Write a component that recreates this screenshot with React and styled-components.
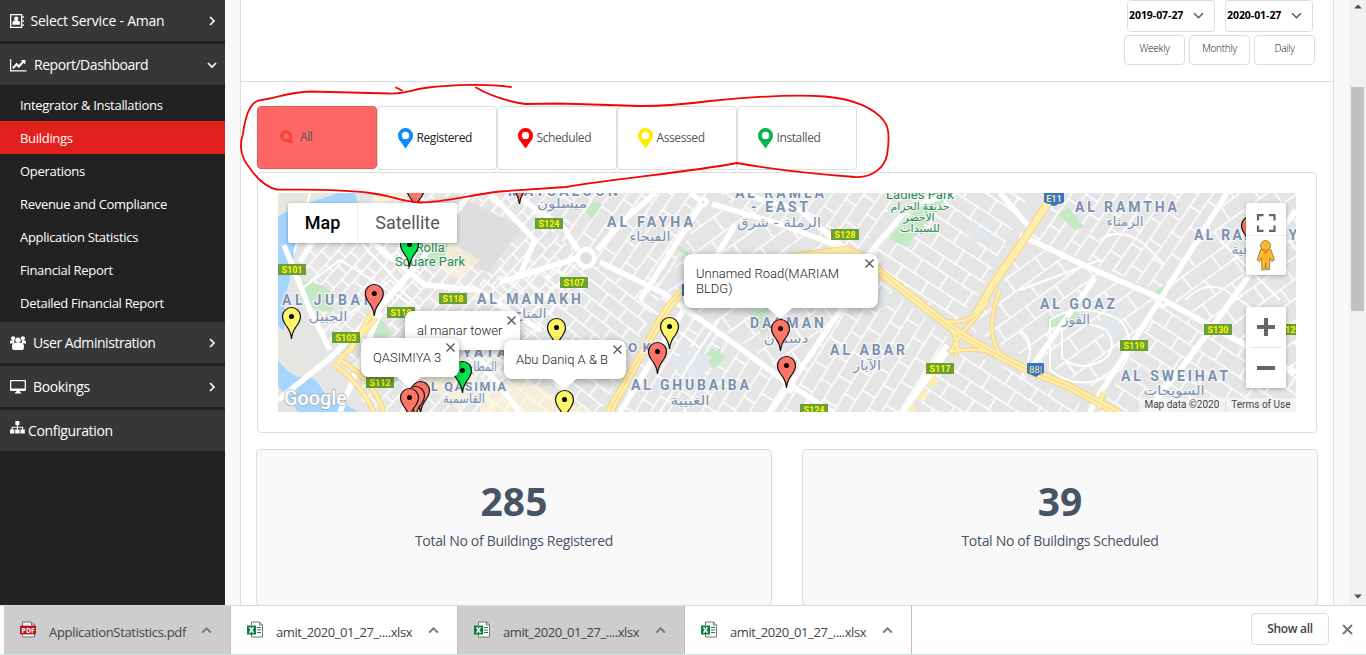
import React from "react";
import styled, { createGlobalStyle, css } from "styled-components";

const GlobalStyle = createGlobalStyle`
  * { box-sizing: border-box; }
  html, body { margin: 0; padding: 0; overflow: hidden; }
  body { font-family: "Open Sans", "Noto Sans", sans-serif; background: #fff; }
`;

/* ---------- frame ---------- */
const Screen = styled.div`
  position: relative;
  display: flex;
  flex-direction: column;
  width: 1366px;
  height: 655px;
  overflow: hidden;
`;
const Viewport = styled.div`
  display: flex;
  height: 605px;
  overflow: hidden;
`;
const Content = styled.main`
  flex: 1;
  min-width: 0;
  padding: 0 15px;
  background: #f9f9f9;
`;
const Panel = styled.section`
  height: 605px;
  overflow: hidden;
  background: #fff;
  border: solid #ddd;
  border-width: 0 1px;
`;

/* ---------- sidebar ---------- */
const Sidebar = styled.nav`
  display: flex;
  flex-direction: column;
  gap: 3px;
  width: 225px;
  background: #222;
`;
const MenuItem = styled.div`
  display: flex;
  align-items: center;
  gap: ${(p) => p.$gap}px;
  height: 41px;
  padding: 0 8px 0 10px;
  background: #373737;
  color: #fff;
  font-size: 14px;
  letter-spacing: ${(p) => p.$track || -0.35}px;
  white-space: nowrap;
`;
const MenuLabel = styled.span`
  flex: 1;
  padding-bottom: 1px;
`;
const SubMenu = styled.div`
  display: flex;
  flex-direction: column;
`;
const SubItem = styled.div`
  height: 33px;
  padding-left: 20px;
  line-height: 34px;
  font-size: 13px;
  letter-spacing: -0.3px;
  color: #fff;
  background: ${(p) => (p.$active ? "#e3211c" : "transparent")};
`;

/* ---------- filters ---------- */
const FilterBar = styled.header`
  display: flex;
  flex-direction: column;
  align-items: flex-end;
  gap: 3px;
  height: 82px;
  padding-right: 18px;
  border-bottom: 1px solid #ddd;
`;
const DateRow = styled.div`
  display: flex;
  gap: 10px;
  padding-right: 2px;
`;
const DateBox = styled.div`
  display: flex;
  align-items: center;
  justify-content: space-between;
  width: 88px;
  height: 32px;
  padding: 0 10px 2px 1px;
  border: 1px solid #ddd;
  border-radius: 4px;
  font-size: 10.5px;
  font-weight: 700;
  letter-spacing: -0.05px;
  color: #000;
`;
const PeriodRow = styled.div`
  display: flex;
  gap: 4px;
`;
const PeriodButton = styled.div`
  width: 61px;
  height: 30px;
  border: 1px solid #ddd;
  border-radius: 4px;
  text-align: center;
  font-size: 10px;
  font-weight: 300;
  letter-spacing: -0.25px;
  line-height: 24px;
  color: #111;
`;

/* ---------- status tabs ---------- */
const Body = styled.div`
  padding: 24px 15px 0;
`;
const Tabs = styled.div`
  display: flex;
  padding-left: 1px;
  height: 66px;
`;
const Tab = styled.div`
  display: flex;
  align-items: center;
  gap: ${(p) => (p.$active ? 7 : 3.5)}px;
  width: 120px;
  height: ${(p) => (p.$active ? 63 : 64)}px;
  padding: 0 0 ${(p) => (p.$active ? 1 : 0)}px ${(p) => (p.$active ? 22 : 20)}px;
  border: 1px solid ${(p) => (p.$active ? "#e25b5b" : "#ddd")};
  border-radius: 4px;
  background: ${(p) => (p.$active ? "#ff6666" : "#fff")};
  color: ${(p) => (p.$dark ? "#222" : "#555")};
  font-size: 12px;
  letter-spacing: -0.4px;
`;
const TabLabel = styled.span`
  padding-bottom: 2px;
`;

/* ---------- map ---------- */
const MapCard = styled.div`
  width: 1060px;
  height: 261px;
  margin-left: 1px;
  padding: 20px;
  border: 1px solid #ddd;
  border-radius: 4px;
`;
const MapCanvas = styled.div`
  position: relative;
  width: 1018px;
  height: 219px;
  overflow: hidden;
  background: #e5e5e5;
  font-family: Roboto, sans-serif;
`;
const MapArt = styled.svg`
  display: block;
  position: absolute;
  inset: 0;
`;
const Floating = css`
  position: absolute;
  background: #fff;
  box-shadow: 0 1px 4px rgba(0, 0, 0, 0.3);
`;
const MapType = styled.div`
  ${Floating}
  display: flex;
  left: 10px;
  top: 10px;
  height: 40px;
  border-radius: 2px;
`;
const MapTypeOption = styled.div`
  width: ${(p) => p.$w}px;
  text-align: center;
  line-height: 40px;
  font-size: 18px;
  font-weight: ${(p) => (p.$on ? 500 : 400)};
  color: ${(p) => (p.$on ? "#000" : "#565656")};
  border-left: ${(p) => (p.$on ? 0 : 1)}px solid #eee;
`;
const ViewControls = styled.div`
  ${Floating}
  left: 968px;
  top: 10px;
  width: 40px;
  height: 72px;
  border-radius: 2px;
`;
const ZoomControls = styled.div`
  ${Floating}
  left: 968px;
  top: 114px;
  width: 40px;
  height: 81px;
  border-radius: 2px;
`;
const Credits = styled.div`
  position: absolute;
  right: 0;
  bottom: 0;
  display: flex;
  height: 14px;
  line-height: 14px;
  font-size: 10px;
  color: #444;
  background: rgba(245, 245, 245, 0.75);
`;
const Credit = styled.span`
  padding: 0 5.5px;
  border-left: ${(p) => (p.$divided ? 1 : 0)}px solid #ddd;
`;
const Info = styled.div`
  position: absolute;
  left: ${(p) => p.$x - 278}px;
  top: ${(p) => p.$y - 193}px;
  width: ${(p) => p.$w}px;
  height: ${(p) => p.$h}px;
  padding: 12px 0 0 12px;
  border-radius: 8px;
  background: #fff;
  box-shadow: 0 2px 7px 1px rgba(0, 0, 0, 0.3);
  font-size: 13px;
  font-weight: 300;
  line-height: 15px;
  letter-spacing: 0;
  color: #222;
  white-space: pre-line;
  &::after {
    content: "";
    display: ${(p) => (p.$tail ? "block" : "none")};
    position: absolute;
    left: ${(p) => p.$tail - p.$x - 12}px;
    top: 100%;
    border: solid transparent;
    border-width: 11px 12px 0;
    border-top-color: #fff;
  }
`;
const CloseMark = styled.svg`
  position: absolute;
  right: 4px;
  top: 5px;
`;

/* ---------- totals ---------- */
const Totals = styled.div`
  display: flex;
  gap: 30px;
  margin-top: 16px;
`;
const TotalCard = styled.div`
  width: 516px;
  height: 157px;
  padding-top: 24px;
  border: 1px solid #ddd;
  border-radius: 4px;
  background: #f9f9f9;
  color: #475366;
  text-align: center;
`;
const TotalValue = styled.div`
  height: 54px;
  line-height: 54px;
  font-size: 39px;
  font-weight: 700;
`;
const TotalLabel = styled.div`
  padding-top: 1px;
  line-height: 24px;
  font-size: 14px;
  letter-spacing: -0.31px;
`;

/* ---------- scrollbar ---------- */
const Scrollbar = styled.div`
  display: flex;
  flex-direction: column;
  align-items: center;
  justify-content: space-between;
  width: 17px;
  padding: 4px 2px 6px;
  background: #f1f1f1;
`;
const Thumb = styled.div`
  width: 13px;
  height: 224px;
  margin: 78px 0 auto;
  background: #c1c1c1;
`;

/* ---------- downloads ---------- */
const Downloads = styled.footer`
  display: flex;
  align-items: center;
  height: 50px;
  padding: 0 13px 0 4px;
  border-top: 1px solid #d9d9d9;
  border-bottom: 1px solid #d3e2ea;
  background: #fff;
`;
const Download = styled.div`
  display: flex;
  align-items: center;
  width: 227px;
  height: 48px;
  padding: 0 18px 0 16px;
  background: ${(p) => (p.$shade ? "#cdcdcd" : "#fff")};
  border-right: 1px solid #bdbdbd;
  color: #444;
  font-size: 13px;
  letter-spacing: ${(p) => p.$track}px;
`;
const FileName = styled.span`
  flex: 1;
  padding: 4px 0 0 12px;
  white-space: nowrap;
`;
const ShowAll = styled.div`
  width: 78px;
  height: 32px;
  margin: -2px 13px 0 auto;
  border: 1px solid #d9dbde;
  border-radius: 4px;
  text-align: center;
  line-height: 30px;
  font-size: 12px;
  font-weight: 600;
  letter-spacing: -0.3px;
  color: #444;
`;
const CloseBar = styled.svg`
  margin-top: -2px;
`;
const Scribble = styled.svg`
  position: absolute;
  left: 0;
  top: 0;
  pointer-events: none;
`;

/* ---------- icons ---------- */
const Chevron = ({ dir = "right", size = 10, color = "#fff", w = 1.6 }) => {
  const d = { right: "M3 1l4 4-4 4", down: "M1 3l4 4 4-4", up: "M1 7l4-4 4 4" }[dir];
  return (
    <svg width={size} height={size} viewBox="0 0 10 10" fill="none" stroke={color} strokeWidth={w}>
      <path d={d} />
    </svg>
  );
};
const AddressBook = () => (
  <svg width="14" height="14" viewBox="0 0 14 14" fill="#fff">
    <path d="M0 0h12.3v14H0zM1.3 1.3v11.4H11V1.3z" fillRule="evenodd" />
    <circle cx="6.2" cy="4.8" r="2.2" />
    <path d="M2.4 10.700V9c0-1.4.9-2.200 2-2.200h3.600c1.100 0 2 .8 2 2.200v1.700z" />
    <path d="M12.5 2h1.200v2h-1.200zM12.500 6h1.200v2h-1.200zM12.500 10h1.200v2h-1.200z" />
  </svg>
);
const LineChart = () => (
  <svg width="17" height="14" viewBox="0 0 17 14">
    <path d="M.6 1v11.900H16.500" fill="none" stroke="#fff" strokeWidth="1.200" />
    <path d="M2.800 10.300L6.600 6.200l2.200 2.200 4.500-4.600" fill="none" stroke="#fff" strokeWidth="2.100" />
    <path d="M10.800 2h4.600v4.600z" fill="#fff" />
  </svg>
);
const Users = () => (
  <svg width="16" height="14" viewBox="0 0 16 14" fill="#fff">
    <circle cx="3.1" cy="2.3" r="2.1" />
    <circle cx="12.9" cy="2.3" r="2.1" />
    <path d="M0 7.5V6c0-1.1.7-1.8 1.7-1.8h2.7L4.3 7.5zM16 7.5V6c0-1.1-.7-1.8-1.7-1.8h-2.7l.1 3.3z" />
    <circle cx="8" cy="4.3" r="3" stroke="#373737" strokeWidth=".5" />
    <path d="M2.1 12V10c0-2 1-3 2.6-3h6.6c1.6 0 2.6 1 2.6 3v2c0 1.2-.7 1.9-1.8 1.9H3.9c-1.1 0-1.8-.7-1.8-1.9z" />
  </svg>
);
const Desktop = () => (
  <svg width="16" height="14" viewBox="0 0 16 14" fill="#fff">
    <path d="M1 0h14a1 1 0 011 1v9a1 1 0 01-1 1H1a1 1 0 01-1-1V1a1 1 0 011-1zM1.3 1.3v7.3h13.4V1.3z" fillRule="evenodd" />
    <path d="M6.3 11h3.4v1.3H11v1.1H5v-1.1h1.3z" />
  </svg>
);
const Sitemap = () => (
  <svg width="15" height="13" viewBox="0 0 15 13" fill="#fff">
    <path d="M5.4 0h4v4h-4zM0 8.4h4.4v4H0zM5.2 8.4h4.4v4H5.2zM10.4 8.4h4.4v4h-4.4z" />
    <path d="M7.4 4v5M2.2 9V6.2h10.4V9" fill="none" stroke="#fff" strokeWidth="1.1" />
  </svg>
);
const SitemapSlot = styled.span`
  margin-top: -7px;
  line-height: 0;
`;
const StatusPin = ({ color }) => (
  <svg width="15" height="21" viewBox="0 0 15 21">
    <path fillRule="evenodd" fill={color} d="M7.5 0A7.4 7.4 0 000 7.4C0 10 1 11.4 2.5 13.5L7.5 20.5l5-7C14 11.4 15 10 15 7.4A7.4 7.4 0 007.5 0zm0 3.7a3.7 3.7 0 110 7.400 3.700 3.700 0 010-7.400z" />
  </svg>
);
const TiltedPin = () => (
  <svg width="13" height="14" viewBox="0 0 13 14">
    <path fillRule="evenodd" fill="#f4443b" d="M6 .2C2.700 .2 0 2.800 0 6C0 8.500 1.500 10.500 4 11.400L12.300 13.600L11.900 5.500C11.600 2.400 9 .2 6 .2zM6.200 3.200a3 3 0 110 6 3 3 0 010-6z" />
  </svg>
);
const PdfIcon = () => (
  <svg width="17" height="18" viewBox="0 0 17 18">
    <path d="M2.500 5V1h9l3 3v12h-12v-3" fill="#eee" stroke="#777" />
    <path d="M11.500 1v3h3" fill="none" stroke="#777" />
    <rect y="4.700" width="16" height="8.600" fill="#b8131f" />
    <text x="8" y="11.500" textAnchor="middle" fontSize="6.800" fontWeight="700" fill="#fff" textLength="13">PDF</text>
  </svg>
);
const XlsIcon = () => (
  <svg width="17" height="18" viewBox="0 0 17 18">
    <path d="M4.500 4V1h8l3 3v12h-11v-3" fill="#fff" stroke="#777" />
    <path d="M12.500 1v3h3" fill="none" stroke="#777" />
    <path d="M10 6.500h4M10 9h4M10 11.500h4" fill="none" stroke="#1a7f46" strokeWidth="1.100" />
    <rect y="4.500" width="9" height="9" fill="#107c41" />
    <path d="M2.600 6.300l3.800 5.400M6.400 6.300l-3.800 5.400" stroke="#fff" strokeWidth="1.500" />
  </svg>
);

/* ---------- map data ---------- */
const places = [
  ["MAYSALOON", 508, 196, 110, 14], ["AL FAYHA", 607, 227, 86, 14], ["AL MANAKH", 477, 304, 104, 14],
  ["AL JUBAIL", 282, 305, 97, 14], ["YATA", 463, 357, 43, 13.5], ["AL QASIMIA", 421, 391, 85, 12.5],
  ["OK", 628, 352, 23, 13.5], ["AL GHUBAIBA", 631, 390, 118, 14], ["DASMAN", 750, 328, 74, 14],
  ["AL ABAR", 830, 355, 75, 14], ["AL RAMLA", 735, 198, 89, 14], ["- EAST", 751, 212, 57, 14],
  ["AL RAMTHA", 1075, 212, 102, 14], ["AL RAMAQIYA", 1194, 240, 114, 14], ["AL GOAZ", 1040, 309, 75, 14],
  ["AL SWEIHAT", 1121, 381, 107, 14],
];
const arabic = [
  ["ميسلون", 562, 208, 50], ["الفيحاء", 650, 241, 41], ["المناخ", 530, 318, 33], ["الجبيل", 328, 321, 39],
  ["المطاع", 482, 371, 30], ["القاسمية", 464, 403, 42], ["الغبيبة", 690, 405, 39], ["دسمان", 786, 343, 45],
  ["الآبار", 867, 370, 28], ["الرملة - شرق", 779, 227, 84], ["الرمثاء", 1125, 226, 37],
  ["الرماقية", 1254, 254, 45], ["القوز", 1076, 324, 28], ["السويحات", 1174, 395, 61],
];
const parks = [
  ["Rolla", 430, 252, 29, 12], ["Square Park", 430, 265.5, 70, 12], ["Ladies Park", 920, 199, 68, 12],
  ["حديقة الحزام", 920, 210, 59, 10.5], ["الأخضر", 919, 221, 31, 10.5], ["للسيدات", 920, 232, 40, 10.5],
];
const shields = [
  ["S101", 278, 264], ["S103", 332, 332], ["S112", 366, 377], ["S118", 439, 293], ["S118", 387, 307],
  ["S124", 535, 218], ["S107", 560, 277], ["S128", 831, 229], ["S117", 926, 363], ["S124", 800, 404],
  ["S119", 1120, 340], ["S130", 1204, 324], ["S129", 1276, 324],
];
const RED = "#fd7567";
const YELLOW = "#fdf569";
const GREEN = "#00e64d";
const pins = [
  [415.5, 211, RED], [519.5, 204, RED], [409.5, 267, GREEN], [1250.5, 248, RED], [374.3, 316, RED],
  [291.5, 339, YELLOW], [669.5, 349, YELLOW], [556.5, 350, YELLOW], [780.5, 351, RED],
  [657.5, 374, RED], [786.5, 388, RED], [462.5, 393, GREEN], [420.5, 413, RED], [415.5, 418, RED],
  [409.5, 420, RED], [564.5, 422, YELLOW],
];
const majorRoads = [
  "M500 282L578 258M520 198L564 228L578 250M597 250L622 222L655 193M600 262L663 293L740 348L790 385L832 412",
  "M703 202L640 300M712 204L780 224L880 262M690 193L703 202M738 193L800 210L846 250M955 193L908 208L862 262",
  "M850 296L790 385L770 412M947 345L903 412M1020 235L1090 268L1160 298L1296 373M1227 193L1163 295L1097 398L1090 412",
  "M1095 278L1033 365M1000 193L1030 228M620 412L690 300L720 250L735 225M278 400L330 358L372 317L420 262L470 193",
  "M300 262L316 236L360 232L425 285L477 290L540 330M284 245L310 310L330 350M430 312L455 330L520 412M490 193L535 240L520 275",
  "M380 312L340 412M1146 412L1180 370L1210 330L1296 210",
];
const minorRoads = [
  "M640 300l60 48 20 -30M700 348l-40 64M330 330l60 -50 30 28M300 290l40 -30 80 50M310 193l-16 60M345 225l60 65",
  "M1020 290l80 -30M1050 320q30 -20 70 0q20 25 0 50q-40 25 -70 0z M1062 330q20 -12 44 0q12 15 0 28q-24 16 -44 0z",
  "M1100 240q20 -14 44 4l20 20M1020 330q20 14 0 50M1185 300q20 -20 40 -10l30 20M1220 240l60 60",
];
const Blocks = ({ id, angle, w, h }) => (
  <pattern id={id} width={w} height={h * 2} patternUnits="userSpaceOnUse" patternTransform={`rotate(${angle})`}>
    <path d={`M0 1H${w}M0 ${h}H${w}M2 0V${h}M${w / 2} ${h}V${h * 2}`} stroke="#fff" strokeWidth="1.6" fill="none" />
  </pattern>
);

function CityMap() {
  return (
    <MapArt width="1018" height="219" viewBox="278 193 1018 219">
      <defs>
        <Blocks id="west" angle={-48} w={19} h={11} />
        <Blocks id="oldTown" angle={38} w={24} h={13} />
        <Blocks id="middle" angle={-55} w={32} h={13} />
        <Blocks id="north" angle={33} w={30} h={15} />
        <Blocks id="east" angle={-58} w={28} h={14} />
        <Blocks id="outer" angle={-36} w={36} h={17} />
      </defs>
      <path d="M278 193h1018v219h-1018z" fill="#e5e5e5" />
      <path d="M300 193h220l60 65l-80 154h-130l-40 -60l-30 -80z" fill="url(#west)" />
      <path d="M480 280l100 -22l80 40l-60 114h-120z" fill="url(#oldTown)" />
      <path d="M510 193h200l-50 100l-80 -35z" fill="url(#middle)" />
      <path d="M663 293l120 90l47 29h-210z" fill="url(#east)" />
      <path d="M705 200l80 25l60 30l10 45l-60 80l-130 -90z" fill="url(#outer)" />
      <path d="M720 193h180l-40 60l-120 -40z" fill="url(#middle)" />
      <path d="M850 300l30 -20l70 60l-50 72h-90l-20 -30z" fill="url(#east)" />
      <path d="M860 262l60 -69h110l-50 100l-30 35z" fill="url(#north)" />
      <path d="M1000 290l20 -50l140 60l-60 90l-130 -60z" fill="url(#outer)" />
      <path d="M950 345l85 35l60 32h-185z" fill="url(#north)" />
      <path d="M1050 193h177l-65 100l-140 -60z" fill="url(#middle)" />
      <path d="M1165 295l60 -102h71v180z" fill="url(#outer)" />
      <path d="M1160 303l136 70v39h-196z" fill="url(#north)" />

      <path d="M278 193h62l-42 42l-14 70l18 70l-24 10z" fill="#e8e6e1" />
      <path d="M414 203l42 -8l66 32l-34 46l-70 -34z" fill="#dedede" />
      <path d="M338 193h38l-14 18h-28l-26 14l-13 22l-5 32l-6 22v30l-6 -5v-110l18 -9z" fill="#a5d5fd" />
      <path d="M278 360q8 12 20 17q16 -3 22 9q6 12 20 15l18 11h-80z" fill="#a5d5fd" />
      <path d="M278 386l12 14l8 12h-20z" fill="#e3e3e3" />
      <path d="M355 193h54l-22 24h-26zM430 230l50 30l-20 20l-45 -28zM440 345l40 25l-20 42l-46 -38zM480 385l46 -4l64 31h-110z" fill="#fdf3d3" opacity=".6" />
      <g fill="#c5e8c5">
        <path d="M303 281l18 4l15 10l-4 17l-26 -4l-8 -12z" />
        <path d="M422 236l27 8l-8 22l-25 -8zM368 328l14 -8l10 12l-12 12zM594 201l8 4l-10 14l-7 -7zM748 312l20 -4l3 20l-9 7zM712 355l9 -8l-1 18l-9 3z" />
        <path d="M900 225l35 -32l12 4l-41 50l-18 -8zM1058 215l10 -8l16 20l-9 3zM1046 318l32 -10l2 14l-32 6zM1156 291l10 -7l5 8l-15 4z" />
        <path d="M712 348l14 9l-10 10l-12 -8z" />
        <path d="M676 246l9 6M684 252l6 4" stroke="#c5e8c5" strokeWidth="4" />
      </g>
      <g fill="#e3e8ed">
        <path d="M686 345l26 12l-12 24l-28 -14zM966 232l12 -8l10 12l-14 8zM1104 314l18 12l-8 14l-18 -12zM880 290l14 6l-10 14l-14 -4zM540 335l20 -8l14 16l-20 10z" />
      </g>

      <g fill="none" stroke="#fff" strokeWidth="2">{minorRoads.map((d) => <path key={d} d={d} />)}</g>
      <g fill="none" stroke="#fff" strokeWidth="5.500" strokeLinejoin="round">{majorRoads.map((d) => <path key={d} d={d} />)}</g>
      <circle cx="586" cy="258" r="8.500" fill="#e0e0e0" stroke="#fff" strokeWidth="5" />
      <circle cx="703" cy="202" r="3.500" fill="#e0e0e0" stroke="#fff" strokeWidth="4" />
      <circle cx="1163" cy="302" r="3.500" fill="#e0e0e0" stroke="#fff" strokeWidth="4" />
      <circle cx="790" cy="386" r="6" fill="#fff" />

      {[["#f5d480", 8.5], ["#ffeeaa", 6.5]].map(([c, w]) => (
        <g key={c} fill="none" stroke={c} strokeWidth={w} strokeLinejoin="round">
          <path d="M608 414L655 330Q670 300 690 286L760 262L845 250Q865 254 880 272L950 327Q985 350 1028 370L1068 386L1120 414" />
          <path d="M1054 193L1022 243Q1002 270 990 290L976 314" />
          <path d="M940 320Q968 328 988 302M1000 290Q984 330 1000 354M952 330Q960 348 956 356M978 316Q962 330 950 352Q970 346 1000 354" strokeWidth={w - 4} />
          <path d="M376 318L338 362M372 312L350 352M340 360Q372 378 384 412M333 364Q360 382 374 412M1104 392l-6 16" strokeWidth={w - 3} />
        </g>
      ))}
      <path d="M608 414L655 330Q670 300 690 286M880 272L950 327Q985 350 1028 370L1068 386L1120 414" fill="none" stroke="#f5d480" />
      <path d="M947 362L908 412" fill="none" stroke="#fbeeb9" strokeWidth="9" strokeDasharray="12 6" />
      <path d="M947 352L903 412" fill="none" stroke="#fff" strokeWidth="5" />

      <g fontWeight="700" fill="#7d90ae" stroke="#f4f5f7" strokeWidth="2.500" paintOrder="stroke">
        {places.map(([t, x, y, w, s]) => (
          <text key={t} x={x} y={y} fontSize={s} textLength={w}>{t}</text>
        ))}
      </g>
      <g fontFamily="DejaVu Sans, sans-serif" fontSize="13" fill="#7d90ae" stroke="#f4f5f7" strokeWidth="2" paintOrder="stroke" textAnchor="middle">
        {arabic.map(([t, x, y, w]) => (
          <text key={t} x={x} y={y} textLength={w} lengthAdjust="spacingAndGlyphs">{t}</text>
        ))}
      </g>
      <g fontFamily="Roboto, DejaVu Sans, sans-serif" fill="#2b8a50" stroke="#f1f7f1" strokeWidth="2" paintOrder="stroke" textAnchor="middle">
        {parks.map(([t, x, y, w, s]) => (
          <text key={t} x={x} y={y} fontSize={s} textLength={w} lengthAdjust="spacingAndGlyphs">{t}</text>
        ))}
      </g>
      {shields.map(([t, x, y]) => (
        <g key={t + x}>
          <rect x={x} y={y} width="28" height="11" fill="#689f38" />
          <text x={x + 14} y={y + 9} textAnchor="middle" fontSize="9" fontWeight="700" fill="#fff600" textLength="21">{t}</text>
        </g>
      ))}
      <g fill="#3574cc">
        <path d="M1044 193h20v9q-2 2 -6 2q-2 2 -4 2q-2 0 -4 -2q-4 0 -6 -2zM1027 363h17v10l-5 2l-3 2l-4 -2l-5 -2zM682 284h10v12h-10z" />
      </g>
      <text x="1054" y="202" textAnchor="middle" fontSize="9" fontWeight="700" fill="#ffe873">E11</text>
      <text x="1035.500" y="373" textAnchor="middle" fontSize="9.500" fill="#ffe873">88|</text>
      <text x="284" y="405" fontSize="20" fontWeight="500" textLength="63" lengthAdjust="spacingAndGlyphs" fill="#fff" stroke="#a9b0b6" strokeWidth="1.500" paintOrder="stroke">Google</text>

      {pins.map(([x, y, c]) => (
        <g key={x + "-" + y} transform={`translate(${x} ${y})`}>
          <path d="M0 0C-.8 -8 -3 -10 -5.500 -13.500C-7.500 -16.500 -9 -19 -9 -22.500A9 9 0 019 -22.500C9 -19 7.500 -16.500 5.500 -13.500C3 -10 .8 -8 0 0z" fill={c} stroke="#111" strokeWidth="1.200" />
          <circle cy="-22.500" r="2.500" fill="#000" />
        </g>
      ))}
    </MapArt>
  );
}

const Bubble = ({ x, y, w, h, tail, children }) => (
  <Info $x={x} $y={y} $w={w} $h={h} $tail={tail}>
    {children}
    <CloseMark width="9" height="9" viewBox="0 0 9 9" stroke="#555" strokeWidth="1.300">
      <path d="M.5 .5l8 8M8.500 .5l-8 8" />
    </CloseMark>
  </Info>
);

const Pegman = () => (
  <svg width="40" height="72" viewBox="0 0 40 72">
    <g fill="none" stroke="#666" strokeWidth="2.200">
      <path d="M12 17.500V12.100h5.500M23 12.100h5.500v5.400M28.500 22.500v5.400H23M17.500 27.900H12v-5.400" />
    </g>
    <path d="M0 32.500h40" stroke="#eee" />
    <g fill="#fbb829" stroke="#8a7443" strokeWidth=".8">
      <path d="M14.500 46.500h10.400l3.400 10.500l-2.500 1.500l-2 -3.500l-.2 11.800h-3.300l-.6 -7l-.6 7h-3.300l-.2 -11.800l-2 3.500l-2.500 -1.500z" />
      <circle cx="19.500" cy="42.500" r="5" />
    </g>
    <path d="M16.500 47.200h6.200l-3.100 4.500z" fill="#e58a2b" />
  </svg>
);

const reports = ["Integrator & Installations", "Buildings", "Operations", "Revenue and Compliance", "Application Statistics", "Financial Report", "Detailed Financial Report"];
const statuses = [["Registered", "#0a8cff"], ["Scheduled", "#ff0000"], ["Assessed", "#ffeb00"], ["Installed", "#0bb34f"]];

export default function App() {
  return (
    <Screen>
      <GlobalStyle />
      <Viewport>
        <Sidebar>
          <MenuItem $gap={6.5} $track={-0.22}><AddressBook /><MenuLabel>Select Service - Aman</MenuLabel><Chevron /></MenuItem>
          <MenuItem $gap={7} $track={-0.46}><LineChart /><MenuLabel>Report/Dashboard</MenuLabel><Chevron dir="down" /></MenuItem>
          <SubMenu>
            {reports.map((r) => <SubItem key={r} $active={r === "Buildings"}>{r}</SubItem>)}
          </SubMenu>
          <MenuItem $gap={7} $track={-0.45}><Users /><MenuLabel>User Administration</MenuLabel><Chevron /></MenuItem>
          <MenuItem $gap={7}><Desktop /><MenuLabel>Bookings</MenuLabel><Chevron /></MenuItem>
          <MenuItem $gap={3}><SitemapSlot><Sitemap /></SitemapSlot><MenuLabel>Configuration</MenuLabel></MenuItem>
        </Sidebar>

        <Content>
          <Panel>
            <FilterBar>
              <DateRow>
                {["2019-07-27", "2020-01-27"].map((d) => (
                  <DateBox key={d}>{d}<Chevron dir="down" size={11} color="#555" w={1.3} /></DateBox>
                ))}
              </DateRow>
              <PeriodRow>
                {["Weekly", "Monthly", "Daily"].map((p) => <PeriodButton key={p}>{p}</PeriodButton>)}
              </PeriodRow>
            </FilterBar>
            <Body>
              <Tabs>
                <Tab $active><TiltedPin /><TabLabel>All</TabLabel></Tab>
                {statuses.map(([name, color]) => (
                  <Tab key={name} $dark={name === "Registered"}><StatusPin color={color} /><TabLabel>{name}</TabLabel></Tab>
                ))}
              </Tabs>
              <MapCard>
                <MapCanvas>
                  <CityMap />
                  <Bubble x={405} y={311} w={115} h={39}>al manar tower</Bubble>
                  <Bubble x={361} y={338} w={98} h={39} tail={409}>QASIMIYA 3</Bubble>
                  <Bubble x={504} y={340} w={122} h={39} tail={564}>{"Abu Daniq A & B"}</Bubble>
                  <Bubble x={684} y={254} w={194} h={54} tail={780}>{"Unnamed Road(MARIAM\nBLDG)"}</Bubble>
                  <MapType>
                    <MapTypeOption $w={69} $on>Map</MapTypeOption>
                    <MapTypeOption $w={100}>Satellite</MapTypeOption>
                  </MapType>
                  <ViewControls><Pegman /></ViewControls>
                  <ZoomControls>
                    <svg width="40" height="81" viewBox="0 0 40 81">
                      <path d="M11 20h18M20 11v18M11 61h18" stroke="#666" strokeWidth="4" />
                      <path d="M5 40.500h30" stroke="#e6e6e6" />
                    </svg>
                  </ZoomControls>
                  <Credits><Credit>Map data ©2020</Credit><Credit $divided>Terms of Use</Credit></Credits>
                </MapCanvas>
              </MapCard>
              <Totals>
                <TotalCard><TotalValue>285</TotalValue><TotalLabel>Total No of Buildings Registered</TotalLabel></TotalCard>
                <TotalCard><TotalValue>39</TotalValue><TotalLabel>Total No of Buildings Scheduled</TotalLabel></TotalCard>
              </Totals>
            </Body>
          </Panel>
        </Content>

        <Scrollbar>
          <svg width="8" height="5" viewBox="0 0 8 5"><path d="M0 4.500L4 .5l4 4z" fill="#505050" /></svg>
          <Thumb />
          <svg width="8" height="5" viewBox="0 0 8 5"><path d="M0 .5l4 4 4-4z" fill="#505050" /></svg>
        </Scrollbar>
      </Viewport>

      <Downloads>
        <Download $shade $track={-0.32}><PdfIcon /><FileName>ApplicationStatistics.pdf</FileName><Chevron dir="up" size={11} color="#777" w={1.7} /></Download>
        {[false, true, false].map((shade, i) => (
          <Download key={i} $shade={shade} $track={-0.42}><XlsIcon /><FileName>amit_2020_01_27_....xlsx</FileName><Chevron dir="up" size={11} color="#777" w={1.7} /></Download>
        ))}
        <ShowAll>Show all</ShowAll>
        <CloseBar width="11" height="11" viewBox="0 0 11 11" stroke="#777" strokeWidth="2"><path d="M1 1l9 9M10 1l-9 9" /></CloseBar>
      </Downloads>

      <Scribble width="1366" height="220" viewBox="0 0 1366 220" fill="none" stroke="#f40505" strokeWidth="1.800" strokeLinecap="round" strokeLinejoin="round">
        <path d="M511 87C490 84 455 84 425 88C410 90 406 94 390 93.500L310 91.500C290 92 276 98 262 100C250 100 245 118 243 134C238 148 243 160 249 167C255 176 264 187 277 189.500C310 190 340 189 370 193C390 195 402 202 420 202.500C445 202 470 195 500 191.500L566 187C620 178 690 172 737 163C770 169 815 174 855 177C875 178 885 165 887 155C889 143 890 128 884 121C875 109 855 99 825 96.500C790 94 750 97 710 101C680 105 660 106 640 106L560 103.500L525 104C500 100 487 94 476 87.500" />
        <path d="M396 87.500l6 3" />
      </Scribble>
    </Screen>
  );
}
